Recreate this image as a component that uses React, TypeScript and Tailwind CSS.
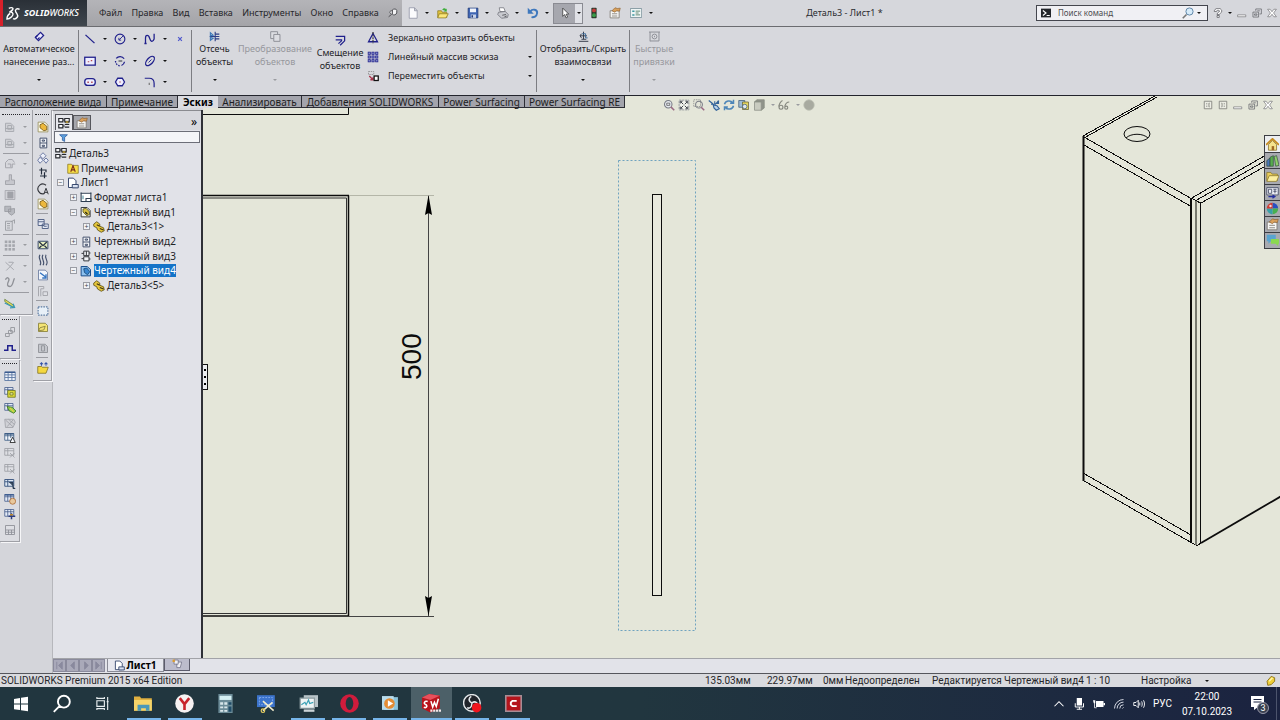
import React from "react";

const navy = "#20208c";
const gray = "#8d8f96";

const icons: Record<string, React.ReactNode> = {
  dimension: (
    <g fill="#eef" stroke={navy} strokeWidth="1.8">
      <path d="M2 9.500 9.500 2 14 6.500 6.500 14z" />
      <path d="M5 12.500 8 9.500M2 9.500 5 6.500" />
    </g>
  ),
  line: <path d="M2 2.500 14 13.500" stroke={navy} strokeWidth="1.8" />,
  circle: (
    <g fill="none" stroke={navy} strokeWidth="1.500">
      <circle cx="8" cy="8" r="6.500" />
      <path d="M7 9 12 4M6.500 6.500v3h3" strokeWidth="1.2" />
    </g>
  ),
  spline: <path d="M2 14V7c0-5 4-5 5.500 0s4 6 6 1V1M.5 14h3" fill="none" stroke={navy} strokeWidth="1.700" />,
  point: <path d="M5.500 5.500l5 5M10.500 5.500l-5 5" stroke="#5058cc" strokeWidth="1.600" />,
  rect: (
    <g>
      <rect x="1" y="3" width="14" height="10.500" fill="#eef" stroke={navy} strokeWidth="1.700" />
      <path d="M5 9h2M9 7.500h2" stroke="#b04a50" strokeWidth="1.500" />
    </g>
  ),
  arc: (
    <g fill="none" stroke={navy} strokeWidth="1.700">
      <path d="M3 4.500a6.500 6.500 0 0 1 10.500.500M14 9a6.500 6.500 0 0 1-4 5" />
      <path d="M2 8a6.500 6.500 0 0 0 6.500 6.500" strokeDasharray="2 1.500" />
      <path d="M6 8h5" stroke="#55585f" />
    </g>
  ),
  ellipse: (
    <g fill="none" stroke={navy} strokeWidth="1.700">
      <ellipse cx="8" cy="8" rx="7.500" ry="4" transform="rotate(-48 8 8)" />
      <path d="M6 10l4-4" strokeWidth="1.2" />
    </g>
  ),
  slot: (
    <g>
      <rect x="1" y="3.500" width="14" height="9" rx="4" fill="#eef" stroke={navy} strokeWidth="1.700" />
      <path d="M4.500 8.200h2M9.500 8.200h2" stroke="#b04a50" strokeWidth="2" />
    </g>
  ),
  polygon: (
    <g>
      <path d="M5 3h6l3 5-3 5H5L2 8z" fill="#eef" stroke={navy} strokeWidth="1.700" />
      <path d="M7 8h2" stroke="#b04a50" strokeWidth="1.500" />
    </g>
  ),
  fillet: (
    <g fill="none" stroke={navy} strokeWidth="1.600">
      <path d="M1 3h6c5 0 6.500 3 6.500 7v5" />
      <path d="M7 9v3" stroke="#777" />
    </g>
  ),
  trim: (
    <g fill="none" stroke="#2c3f86" strokeWidth="1.600">
      <path d="M9 1v14M1 8h14M9.500 4.500H15M9.500 11.500H15" />
      <path d="M2 2.500v4.500l4-1zM2 13.500V9.500l4 1z" stroke="#3c78b8" />
    </g>
  ),
  convert: (
    <g fill="#dcdde2" stroke={gray} strokeWidth="1.400">
      <path d="M1 1h10v10H1z" />
      <path d="M5.500 5h9v10h-9z" />
    </g>
  ),
  offset: (
    <g fill="none" stroke={navy} strokeWidth="1.800">
      <path d="M1 2h13v6.500L7.500 15" />
      <path d="M1 7h8.500v1.500L5 12.500" />
    </g>
  ),
  mirror: (
    <g>
      <path d="M8 2 2 13h12z" fill="none" stroke={navy} strokeWidth="1.700" />
      <path d="M8 0v15" stroke="#333" strokeWidth="1.500" strokeDasharray="2.500 1" />
    </g>
  ),
  pattern: (
    <g fill="#7e86c8" stroke={navy} strokeWidth="1">
      {[2, 7, 12].map((y) => [2, 7, 12].map((x) => <rect key={`${x}-${y}`} x={x - 0.5} y={y - 0.5} width="3" height="3" />))}
    </g>
  ),
  move: (
    <g>
      <rect x="2" y="2" width="7" height="4" fill="none" stroke="#888" strokeDasharray="2 1" />
      <path d="M3 8l5 5M8 9.500V13H4.500" fill="none" stroke="#a8334a" strokeWidth="1.700" />
      <rect x="9.500" y="8" width="5.500" height="6" fill="#fff" stroke="#111" strokeWidth="1.700" />
    </g>
  ),
  relations: (
    <g fill="none" stroke="#333a4a" strokeWidth="1.400">
      <path d="M1 15h14M8 1v11M3 7h10M5 4l-2 3 2 3M5 12h7" />
      <path d="M6 4h5v6h3" stroke="#3c6a98" />
    </g>
  ),
  snaps: (
    <g fill="none" stroke={gray} strokeWidth="1.400">
      <path d="M0 1.500h16M1.500 1.500V15M1.500 14.500h13M14.500 1.500V14.500" />
      <circle cx="8" cy="8" r="3.500" />
      <path d="M8 7v2" />
    </g>
  ),
  pin: (
    <g fill="#f4f4f6" stroke="#4a4b50" strokeWidth="1.500">
      <path d="M7 3c2-2 7-2 7 1v4c-1 3-5 4-7 2zM7 4.500C2 4 2 8 5 9.500M6 10l-5 4" />
    </g>
  ),
  file: <path d="M3 1h7l3.500 3.500V15H3zM10 1v4h3.500" fill="#fbfbfd" stroke="#8b8fa0" />,
  open: (
    <g>
      <path d="M1 14V5h5l1 2h6v7z" fill="#e3c33c" stroke="#8c7a20" />
      <path d="M3 9h12l-3 5.500H1z" fill="#fbe67a" stroke="#8c7a20" />
      <path d="M7 4c1-3 4-3 5-1l1-1v4H9l1.500-1.500" fill="#3fae3c" />
    </g>
  ),
  save: (
    <g>
      <path d="M1.500 1.500h13v13h-13z" fill="#3f66b4" stroke="#1f3774" />
      <path d="M4 2h8v5H4z" fill="#f0f3fa" />
      <path d="M5 10h7v4.500H5z" fill="#c9d3e8" />
      <path d="M6 11h2v3H6z" fill="#1f3774" />
    </g>
  ),
  print: (
    <g stroke="#6c6e75">
      <path d="M3 1h6l2 5H4z" fill="#fff" />
      <path d="M2 7l9-1 4 4-1 4-8 1-5-5z" fill="#c9cad0" />
      <path d="M7 11l5-1M10 13l3-1" fill="none" stroke="#3c3d42" />
    </g>
  ),
  undo: (
    <g>
      <path d="M1 1v8h8z" fill="#3f78bd" />
      <path d="M4.500 6C7 2 14 3 13.500 8S9 14 6 13.500" fill="none" stroke="#3f78bd" strokeWidth="2.600" />
    </g>
  ),
  cursor: <path d="M5 1.500v11l2.500-2.500L9.500 14.500l2-1-2-4h3.500z" fill="#fff" stroke="#333" />,
  light: (
    <g>
      <rect x="4.500" y="1" width="7" height="14" rx="1" fill="#2c3a2c" />
      <circle cx="8" cy="4.500" r="2.600" fill="#c43a3a" />
      <circle cx="8" cy="11" r="2.600" fill="#3a9c48" />
    </g>
  ),
  props: (
    <g>
      <path d="M1.500 5h12v9.500h-12z" fill="#f6f6f4" stroke="#77716a" />
      <path d="M4 9h7M4 12h7" stroke="#77716a" />
      <path d="M4 5l4-4 3 1 4-.5-1 4-4-.5-2 2z" fill="#d9a05c" stroke="#8a5c2c" strokeWidth=".8" />
    </g>
  ),
  options: (
    <g>
      <path d="M.5 2h15v12H.5z" fill="#eef4f4" stroke="#6f8792" />
      <path d="M3 4.500h3v2H3zM3 9.500h3v2H3z" fill="#3f98a0" />
      <path d="M7.500 5.500h6M7.500 8h4M7.500 10.500h6" stroke="#3e6c50" />
    </g>
  ),
  prompt: (
    <g>
      <path d="M0 1h16v14H0z" fill="#23262b" />
      <path d="M3 4l5 4-5 4M9 12h5" fill="none" stroke="#fff" strokeWidth="1.800" />
    </g>
  ),
  search: (
    <g>
      <path d="M6 10l-5 5" stroke="#777" strokeWidth="2.200" />
      <circle cx="10" cy="6" r="4.800" fill="#d7ebf9" stroke="#5f86a8" strokeWidth="1.300" />
    </g>
  ),
  help: <path d="M2 5.500C2-1 14-1 14 5c0 3.500-4 3.500-4 5.500H6.500c0-4 4-3.500 4-5.500s-5-2-5 .5zM6.500 12H10v3H6.500z" fill="#fff" stroke="#55565c" strokeWidth="1.200" />,
  min: <path d="M1 11h13v3H1z" fill="#fff" stroke="#66676c" />,
  restore: (
    <g fill="none" stroke="#66676c" strokeWidth="1.200">
      <path d="M1.500 6.500h9v8h-9zM4 9.500h4v2H4zM6 4.500V1.500h9v8h-3M8.500 4.500h4" />
    </g>
  ),
  close: <path d="M1 2h4l3 4 3-4h4l-4.500 6 4.500 6h-4l-3-4-3 4H1l4.500-6z" fill="#fff" stroke="#66676c" />,
  paneL: <path d="M2 2h12v12H2zM6 5v2M6 9v2M10.500 5h-1v6h1" fill="#ecede4" stroke="#7b7c78" strokeWidth="1.300" />,
  paneR: <path d="M2 2h12v12H2zM5.500 5h1v6h-1M10 5v2M10 9v2" fill="#ecede4" stroke="#7b7c78" strokeWidth="1.300" />,
  zoomPrev: (
    <g fill="none">
      <circle cx="7" cy="7" r="5" fill="#e6eaf0" stroke="#777b84" strokeWidth="1.400" />
      <path d="M5 5.500h4v3H5z" stroke="#555" />
      <path d="M10.500 10.500l4.500 4.500" stroke="#9a6b84" strokeWidth="2" />
    </g>
  ),
  zoomFit: (
    <g fill="none" stroke="#3c4048">
      <path d="M1.500 1.500h13v13h-13z" fill="#f0f1ec" stroke="#80848c" strokeDasharray="3 1" />
      <path d="M4 4l3 3M12 4L9 7M4 12l3-3M9 9l3 3M3 6V3h3M10 3h3v3M3 10v3h3M13 10v3h-3" strokeWidth="1.300" />
    </g>
  ),
  zoomArea: (
    <g fill="none">
      <path d="M1 1h9v9H1z" stroke="#888" strokeDasharray="2 1" />
      <circle cx="8" cy="7.500" r="4.500" stroke="#777b84" strokeWidth="1.400" />
      <path d="M11 11l4 4" stroke="#9a6b84" strokeWidth="2" />
    </g>
  ),
  section: (
    <g fill="none" stroke="#33639a" strokeWidth="1.500">
      <path d="M1 2l5 4 3 5M4 7h6l4-5M9 3v4M14 2v4h-4" />
      <path d="M7 8l5 1 3 4-4 2-3-3z" fill="#b9d3ea" />
    </g>
  ),
  rotate: (
    <g fill="none" stroke="#4d86b8" strokeWidth="2">
      <path d="M2 7c1-5 8-6 11-2M14 1v4.500H9.500M14 9c-1 5-8 6-11 2M2 15v-4.500h4.500" />
    </g>
  ),
  view3d: (
    <g>
      <path d="M1 2h8v9H1z" fill="#9dbbd6" stroke="#3f5c78" />
      <path d="M6 4h8v10H6z" fill="#e6d65c" stroke="#66603a" />
      <circle cx="9" cy="10" r="3" fill="#dfe7ee" stroke="#3f5c78" />
    </g>
  ),
  cube: (
    <g stroke="#8a8d84">
      <path d="M2 4l3-3h10v11l-4 3V4z" fill="#90938a" />
      <path d="M2 4h9v11H2z" fill="#c9cbc0" />
    </g>
  ),
  glasses: (
    <g fill="none" stroke="#84867e" strokeWidth="1.500">
      <path d="M1 10c1-4 3-7 5-8M9 10c1-4 3-6 6-6" />
      <circle cx="4" cy="11" r="2.600" />
      <circle cx="11" cy="11.500" r="2" />
    </g>
  ),
  sphere: <circle cx="8" cy="8" r="7" fill="#a8aaa0" stroke="#bfc1b6" />,
  home: (
    <g>
      <path d="M3 8v7h10V8L8 3z" fill="#f5e38c" stroke="#8a7430" />
      <path d="M0 8.500 8 1l8 7.500" fill="none" stroke="#c58a1c" strokeWidth="2.200" />
      <path d="M7 10h3v5H7z" fill="#a06a24" />
    </g>
  ),
  books: (
    <g stroke="#2d4c38" strokeWidth=".8">
      <path d="M1 8l4-3v10H1z" fill="#4a76b8" />
      <path d="M5 4l4-2v13H5z" fill="#57ad4e" />
      <path d="M10 3l3-1 3 12-4 1z" fill="#8fd06c" />
    </g>
  ),
  folder: (
    <g stroke="#8c7a30">
      <path d="M1 13V3h5l1.500 2H14v8z" fill="#e9cd5c" />
      <path d="M4 7h12l-3 7H1z" fill="#fcefa0" />
    </g>
  ),
  palette: (
    <g>
      <path d="M1 2h14v9H1z" fill="#eef0f6" stroke="#3e4560" />
      <path d="M3 4h4v5H3zM9 4h4M9 6.500h4M11 4v5" fill="none" stroke="#3e4560" />
      <path d="M3 13h7M8 11l3 2-3 2" fill="none" stroke="#2630a0" strokeWidth="1.500" />
    </g>
  ),
  colors: (
    <g>
      <path d="M8 8V1a7 7 0 0 1 7 7z" fill="#2a50c0" />
      <path d="M8 8h7a7 7 0 0 1-7 7z" fill="#48b050" />
      <path d="M8 8v7a7 7 0 0 1-7-7z" fill="#38a0a8" />
      <path d="M8 8H1a7 7 0 0 1 7-7z" fill="#d03c34" />
      <circle cx="5.500" cy="5" r="1.500" fill="#fff" opacity=".8" />
    </g>
  ),
  chat: (
    <g>
      <path d="M1 1h11v8H6l-3 3V9H1z" fill="#58a4d0" />
      <path d="M6 6h10v6h-1v3l-3-3H6z" fill="#8ad850" />
    </g>
  ),
  tree: (
    <g fill="#f6f6f8" stroke="#26282e" strokeWidth="1.500">
      <path d="M1 2h5.500v4.500H1zM9 2h6v4.500H9zM1 10h5.500v4.500H1z" />
      <path d="M9 10h6M9 13.500h6M6.500 4H9M6.500 12H9" fill="none" />
      <path d="M10 5.500h4v2.500h-4z" fill="#d9b03c" strokeWidth=".6" />
    </g>
  ),
  note: (
    <g>
      <path d="M1 3h5l1 1.500h8V15H1z" fill="#f7df48" stroke="#8a7420" />
      <path d="M5 13l3-8 3 8M6 10.500h4" fill="none" stroke="#7a2c1c" strokeWidth="1.500" />
    </g>
  ),
  sheet: (
    <g fill="#fff" stroke="#34466c" strokeWidth="1.300">
      <path d="M2 1.500h6.500L12 5v9H2z" />
      <path d="M7 10h8v4.500H7z" fill="#dce4f2" />
    </g>
  ),
  format: (
    <g fill="#fff" stroke="#2c3c50" strokeWidth="1.400">
      <path d="M1.500 2v12h13V2" />
      <path d="M1 3h14M8 10h6.500v4H8z" />
      <path d="M4 6v5" stroke="#4a8c9c" />
    </g>
  ),
  viewRound: (
    <g>
      <path d="M1.500 2h8l4 4v8.500h-12z" fill="#f4f4e8" stroke="#34363c" strokeWidth="1.300" />
      <path d="M4 4l4-1 4 4 1 4-4 2-5-5z" fill="#d8c040" stroke="#4c4820" />
      <path d="M7 8l3 3" stroke="#282818" strokeWidth="1.600" />
    </g>
  ),
  part: (
    <g stroke="#5c5014" strokeWidth="1.100">
      <path d="M1 4l4-3 4 3v3l5 2 1 4-4 2-5-3-1-3-4-2z" fill="#e8c83c" />
      <path d="M5 5l4 2M9 10l5 2" fill="none" stroke="#3c3410" strokeWidth="1.500" />
    </g>
  ),
  viewFlat: <path d="M4 1.500h9v13H4zM4 8h9M7 4h3v1.500H7zM7 11h3v1.500H7z" fill="#f2f4f8" stroke="#44506c" strokeWidth="1.300" />,
  viewFlat2: <path d="M5 1.500h7v6H5zM5 9h7v5.500H5zM2 4.500h3M2 11.500h3M8.500 1.500v6M12 4h2M12 12h2" fill="#f2f4f8" stroke="#34363c" strokeWidth="1.300" />,
  viewBlue: (
    <g>
      <path d="M1.500 2h8l4.500 4v8.500H1.500z" fill="#8cc0ee" stroke="#1c4c88" strokeWidth="1.300" />
      <path d="M5 5l4-1 4 5-3 4-4-3z" fill="#3a86d0" stroke="#12406c" />
    </g>
  ),
  filter: <path d="M1 3h14L10 8v7l-4-2V8z" fill="#5ea0dc" stroke="#1c4c94" strokeWidth="1.200" />,
  gPart: <path d="M2 3h7l4 4v7H2zM5 6h5v5H5zM2 10h11" fill="#d0d1d6" stroke="#a6a8ae" strokeWidth="1.200" />,
  gRound: <path d="M2 13V6l4-4h5l3 4M2 13h9V8h4M5 8h4v4" fill="#d6d7dc" stroke="#a0a2a8" strokeWidth="1.200" />,
  gBase: <path d="M7 1h3v7h4v6H2V9h5z" fill="#c6c7cd" stroke="#a0a2a8" strokeWidth="1.200" />,
  gSolid: (
    <g stroke="#a0a2a8">
      <path d="M1.500 2h13v12h-13z" fill="#d0d1d6" />
      <path d="M5 4h7v8H5z" fill="#a0a2a8" />
    </g>
  ),
  gCubes: <path d="M1 3h8v7H1zM6 7l8-1v6l-4 3-4-3z" fill="#b6b8be" stroke="#94969c" />,
  gList: <path d="M2 3h9v12H2zM4 6h4M4 9h4M4 12h4M9 4l5-3v5" fill="#d8d9de" stroke="#9a9ca2" strokeWidth="1.200" />,
  gDots: (
    <g fill="#a4a6ac">
      {[2, 7, 12].map((y) => [1, 6, 11].map((x) => <rect key={`${x}-${y}`} x={x} y={y} width="3.500" height="3.500" />))}
    </g>
  ),
  gCross: <path d="M2 3l11 10M13 3l-5 6-5 5M6 3h6" fill="none" stroke="#a6a8ae" strokeWidth="1.300" />,
  gCurve: <path d="M2 5c2-5 6-2 4 2s-2 7 2 7 4-8 6-11" fill="none" stroke="#8f9197" strokeWidth="1.800" />,
  ruler: (
    <g>
      <path d="M1 3l12 8-1 3-11-8z" fill="#e2da58" stroke="#5d7a3c" />
      <path d="M1 8l12 6M12 9l2 5-6 .5" fill="none" stroke="#3a98b4" strokeWidth="1.800" />
    </g>
  ),
  gBlocks: <path d="M2 10h5v4H2zM6 6h5v4H6zM9 2h5v6H9z" fill="#dcdde2" stroke="#94969c" strokeWidth="1.200" />,
  step: <path d="M0 11h5V5h6v6h5" fill="none" stroke={navy} strokeWidth="2" />,
  table: (
    <g>
      <path d="M1 3h14v11H1zM1 6.500h14M1 10h14M5.500 3v11M10.500 3v11" fill="#eef3fa" stroke="#5c78a4" strokeWidth="1.200" />
      <path d="M1 3h14" stroke="#3c5c90" strokeWidth="2" />
    </g>
  ),
  tableY: (
    <g>
      <path d="M1 2h11v9H1zM1 5h11M5 2v9" fill="#e4ebf6" stroke="#3c5484" />
      <path d="M5 6h10v9H5z" fill="#dcd838" stroke="#66701c" />
      <path d="M8 9h4v3H8z" fill="#f6f4a0" stroke="#66701c" />
    </g>
  ),
  tableG: (
    <g>
      <path d="M1 2h11v9H1zM1 5h11M5 2v9" fill="#e4ebf6" stroke="#3c5484" />
      <path d="M4 6l7 1 5 5-3 3-6-3z" fill="#8cd04c" stroke="#3c6c1c" />
      <path d="M8 8l5 5" stroke="#e8d040" strokeWidth="1.600" />
    </g>
  ),
  gHatch: <path d="M1 3h12l2 4-3 7H2zM2 4l10 9M6 3l8 7M12 4L4 13" fill="#d0d1d6" stroke="#9c9ea4" />,
  tableA: (
    <g fill="#f4f7fc" stroke="#3c5c84" strokeWidth="1.100">
      <path d="M1 2h12v9H1zM1 5h12M5 2v9M9 2v6" />
      <path d="M8 14l3.500-7 3.500 7z" stroke="#222" />
      <path d="M1 2.500h12" strokeWidth="2" />
    </g>
  ),
  gTable: <path d="M1 2h12v9H1zM1 5h12M5 2v9M8 8l6 6M14 8l-6 6" fill="#dedfe4" stroke="#9c9ea4" strokeWidth="1.100" />,
  tableB: (
    <g fill="#dfe8f4" stroke="#34507c" strokeWidth="1.200">
      <path d="M1 2h12v9H1zM1 5h12M5 2v9" />
      <path d="M7 6h5v8h3" fill="#3c5068" stroke="#22344c" />
    </g>
  ),
  tableO: (
    <g>
      <path d="M1 2h12v9H1zM1 5h12M5 2v9M9 2v9" fill="#e4ebf6" stroke="#3c5484" />
      <path d="M1 2.500h12" stroke="#3c5c90" strokeWidth="2" />
      <circle cx="11.500" cy="11" r="4" fill="#e8c89c" stroke="#a8642c" />
    </g>
  ),
  tableR: (
    <g>
      <path d="M1 2h12v9H1zM1 5h12M5 2v9M9 2v9" fill="#e4ebf6" stroke="#3c5484" />
      <path d="M6 11h9M10 7v8" stroke="#2c3c80" strokeWidth="2" />
      <path d="M8 9h4" stroke="#c08c30" strokeWidth="2" />
    </g>
  ),
  gGrid: <path d="M2 2h12v12H2zM2 8h12M2 11h12M6 8v6M10 8v6" fill="#dedfe4" stroke="#90929a" strokeWidth="1.200" />,
  modelView: (
    <g>
      <path d="M1.500 1.500h9l4 4v9h-13z" fill="#fdfbe8" stroke="#8c8450" />
      <path d="M4 5l4-2 5 4v5l-4 1-5-4z" fill="#ecb83c" stroke="#6a4c10" />
    </g>
  ),
  diamond: <path d="M8 1l4 4-4 4-4-4zM4 7l4 4-4 4-3-4zM12 8l3 3-3 4-3-4z" fill="#eef1fa" stroke="#4a5a8c" />,
  align: <path d="M6 1v9M3 4h9v3M10 7v8M4 12h9" fill="none" stroke="#222c3c" strokeWidth="1.600" />,
  detail: (
    <g fill="none" stroke="#34363c" strokeWidth="1.500">
      <path d="M12 3a6.500 6.500 0 1 0-2 11" />
      <path d="M9 15l3-8 3 8M10 12.500h4" strokeWidth="1.300" />
    </g>
  ),
  broken: (
    <g fill="#e4e8f2" stroke="#4a5a80" strokeWidth="1.200">
      <path d="M1.500 2h8v8h-8zM7 8h8v6H7z" />
      <path d="M1.500 5h8M9 11h4" />
    </g>
  ),
  crop: (
    <g>
      <path d="M1.500 3h13v10h-13z" fill="#e8f0c0" stroke="#34466c" strokeWidth="1.300" />
      <path d="M3 4l5 5 5-5M3 12l3-3M13 12l-3-3" fill="none" stroke="#222c3c" strokeWidth="1.500" />
    </g>
  ),
  squiggle: <path d="M4 1c-4 5 4 9 0 14M8 1c-4 5 4 9 0 14M12 1c-3 5 5 9 0 14" fill="none" stroke="#44506c" strokeWidth="1.500" />,
  cropDoc: (
    <g>
      <path d="M2 1.500h9l3 3v10H2z" fill="#f2f6fc" stroke="#5a6c94" />
      <path d="M4 5l8 6M12 7v5H7" fill="none" stroke="#3474c0" strokeWidth="1.800" />
    </g>
  ),
  gPipes: <path d="M2 15V2h7v3H5v10M8 9h6v5H8z" fill="#dedfe4" stroke="#a0a2a8" strokeWidth="1.200" />,
  selection: <rect x="1.500" y="2.500" width="13" height="11" fill="#e8f0f8" stroke="#5878a0" strokeWidth="1.500" strokeDasharray="2 1.500" />,
  picture: <path d="M2 3h9l3 3v8H2zM4 9l7-2-2 5-7 1z" fill="#f4e474" stroke="#8c8440" strokeWidth="1.200" />,
  gClip: <path d="M2 3h9l3 3v8H2zM6 5h4v7H6z" fill="#c4c6cc" stroke="#94969c" strokeWidth="1.300" />,
  folderUp: (
    <g>
      <path d="M1 6h5l1 1h8l-3 8H1z" fill="#f4d840" stroke="#7c6c1c" />
      <path d="M6 5V1M4 3l2-2 2 2M12 5V1M10 3l2-2 2 2" fill="none" stroke="#3454a8" strokeWidth="1.400" />
    </g>
  ),
  coin: (
    <g>
      <path d="M3 9 9 2l5 2v5l-5 5-5 1z" fill="#efcf38" stroke="#8a7018" strokeWidth="1.300" />
      <path d="M6 9l5-5" stroke="#fff6b0" strokeWidth="2" />
    </g>
  ),
  win: <path d="M1 3l6-1v5.600H1zM8 1.800 15 .8v6.800H8zM1 8.500h6V14l-6-.8zM8 8.500h7v6.700l-7-1z" fill="#fff" />,
  find: <path d="M10 1.500a5 5 0 1 1 0 10 5 5 0 0 1 0-10zM6.500 10 1.500 15" fill="none" stroke="#fff" strokeWidth="1.600" />,
  taskView: <path d="M2 5h8v6H2zM2 1v1.500h8V1M2 15v-1.500h8V15M13.500 1v14M12.500 6h2" fill="none" stroke="#e8eef0" strokeWidth="1.200" />,
  explorer: (
    <g>
      <path d="M0 2h5l1 1.500h9V14H0z" fill="#e0b040" />
      <path d="M0 5h15v9H0z" fill="#f6d56a" />
      <path d="M3 14V9h10v5h-3v-2H6v2z" fill="#4a98b8" />
    </g>
  ),
  yandex: (
    <g>
      <circle cx="8" cy="8" r="7.800" fill="#f6f2f2" />
      <path d="M4 3.500 8 8.500 12 3.500M8 8v5.500" fill="none" stroke="#c8242c" strokeWidth="2.200" />
    </g>
  ),
  calc: (
    <g>
      <path d="M2 0h12v16H2z" fill="#6c8c98" />
      <path d="M3 1.500h10V5H3z" fill="#d4f0f4" />
      <path d="M3.500 7h2.500v2H3.500zM7 7h2.500v2H7zM3.500 10.500h2.500v1.500H3.500zM7 10.500h2.500v1.500H7zM3.500 13.500h2.500V15H3.500zM7 13.500h2.500V15H7z" fill="#d8e6ea" />
      <path d="M10.500 7H13v2h-2.500zM10.500 10.500H13V15h-2.500z" fill="#204c68" />
    </g>
  ),
  snip: (
    <g>
      <path d="M0 1h15v10H0z" fill="#3c74cc" />
      <path d="M2 3h11v6H2z" fill="none" stroke="#84acec" strokeDasharray="1.500 1" strokeWidth=".8" />
      <path d="M5 6l9 8M13 7l-8 7" stroke="#f2eccc" strokeWidth="1.300" />
      <circle cx="5" cy="14" r="1.500" fill="none" stroke="#e8d060" />
    </g>
  ),
  monitor: (
    <g>
      <path d="M4 1h12v10H4z" fill="#b8c4c8" />
      <path d="M1 3.500h12v8.500H1z" fill="#eef4f4" stroke="#8c9ca0" />
      <path d="M2 9l3-2 1 2 2-4 1 3 3-1" fill="none" stroke="#38a0b4" />
      <path d="M4 15h9v-2H4z" fill="#ccd4d8" />
    </g>
  ),
  opera: (
    <g>
      <circle cx="8" cy="8" r="7.800" fill="#d01c3c" />
      <ellipse cx="8" cy="8" rx="3.200" ry="5.400" fill="#22373f" />
    </g>
  ),
  player: (
    <g>
      <path d="M2 2h13v12H2z" fill="#8cc4dc" />
      <path d="M0 1h11v13H0z" fill="#b8dcec" />
      <circle cx="7" cy="8" r="5" fill="#e48c34" />
      <path d="M5.500 5l5 3-5 3z" fill="#fff" />
    </g>
  ),
  solidworks: (
    <g>
      <path d="M0 3 6 0l9 1.500V12L7 15.500 0 12z" fill="#b8141c" />
      <path d="M0 3 6 0l9 1.500L7 5z" fill="#e8505c" />
      <path d="M4.800 6.300C2 5.500 1 8 3 8.800S4 12.200 1.500 11.200M7.500 6l1.500 5 1.500-4L12 10.500 13.800 4" fill="none" stroke="#fff" strokeWidth="1.300" />
      <path d="M7 14h9" stroke="#f4e8e8" strokeWidth="2" strokeDasharray="1.800 .6" />
    </g>
  ),
  obs: (
    <g>
      <circle cx="7.500" cy="7.500" r="7" fill="#20242a" stroke="#e4e8ea" strokeWidth="1.200" />
      <path d="M7.500 7.500C4 6 5 3 7 2M7.500 7.500c3-2 5 0 5 2M7.500 7.500c0 4-2 5-4 4" fill="none" stroke="#e4e8ea" strokeWidth="1.300" />
      <circle cx="11.500" cy="11.500" r="4" fill="#f0141c" />
    </g>
  ),
  camtasia: (
    <g>
      <path d="M0 0h16v16H0z" fill="#a88c94" />
      <path d="M1.500 1.500h13v13h-13z" fill="#b4141c" />
      <path d="M11 5.500H7L5.500 7v2L7 10.500h4" fill="none" stroke="#fff" strokeWidth="1.800" />
    </g>
  ),
  chevronUp: <path d="M2 11l6-6 6 6" fill="none" stroke="#fff" strokeWidth="1.400" />,
  mic: (
    <g>
      <path d="M5 0h7v10H5z" fill="#fff" />
      <path d="M3 7v5h11V7M8.500 12v3M5 15h7" fill="none" stroke="#fff" strokeWidth="1.300" />
    </g>
  ),
  battery: (
    <g>
      <path d="M4 4h10v8H4z" fill="#fff" />
      <path d="M14 6.500h2v3h-2zM0 3h3v4H1z" fill="#fff" />
      <path d="M2 6v7h3" fill="none" stroke="#fff" />
    </g>
  ),
  wifi: <path d="M2 14A12 12 0 0 1 14 2M5.500 14A8.500 8.500 0 0 1 14 5.500M9 14a5 5 0 0 1 5-5M12.500 14l1.500-1.500" fill="none" stroke="#e4e8f0" strokeWidth="1.200" />,
  speaker: <path d="M1 6h3l3-3v10l-3-3H1zM9 6v4M11.500 4.500c1 2 1 5 0 7M14 3c1.800 3 1.800 7 0 10" fill="none" stroke="#fff" strokeWidth="1.200" />,
  addSheet: (
    <g>
      <path d="M3 1.500h6v6H3zM9 4.500h5l-2 8H7V7" fill="#f0f0f4" stroke="#64647c" />
      <path d="M1 1l3 3M4 1L1 4" stroke="#dc9c30" strokeWidth="1.800" />
    </g>
  ),
};

function Icon({ name, className = "size-3" }: { name: string; className?: string }) {
  return (
    <svg viewBox="0 0 16 16" fill="none" className={`block shrink-0 ${className}`} aria-hidden="true">
      {icons[name]}
    </svg>
  );
}

function Caret({ muted = false }: { muted?: boolean }) {
  return (
    <svg viewBox="0 0 4 2" className="block h-[2px] w-[4px] shrink-0" aria-hidden="true">
      <path d="M0 0h4L2 2z" fill={muted ? "#9a9ba0" : "#111"} />
    </svg>
  );
}

const menus = ["Файл", "Правка", "Вид", "Вставка", "Инструменты", "Окно", "Справка"];

const quick = [
  ["file", "Создать"],
  ["open", "Открыть"],
  ["save", "Сохранить"],
  ["print", "Печать"],
  ["undo", "Отменить"],
];

function TitleBar() {
  return (
    <header className="flex h-[27px] items-stretch border-b border-[#6b6c70] bg-[#d6d7dc]">
      <div className="flex w-[87px] shrink-0 items-center gap-[3px] border-l-[3px] border-[#d8202a] bg-linear-to-b from-[#2a3037] to-[#3f464d] pl-[3px]">
        <svg viewBox="0 0 16 16" className="size-[15px] shrink-0" fill="none" stroke="#fff" strokeWidth="1.500" aria-hidden="true">
          <path d="M3 2.500C6 1 8.500 2 7 4S4.500 6 3.500 6.500C8 6 8.500 9 6 11.500S2 14 1 14c0-3 1.500-5 3.500-6" />
          <path d="M14.500 3.500C11.500 2 9 4 10.500 6.500S13.500 10 12 12s-3.500 2-4.500 1.500" />
        </svg>
        <span className="text-[9px] font-medium text-white italic">
          <b>SOLID</b>WORKS
        </span>
      </div>
      <nav className="flex w-[315px] shrink-0 items-center justify-between bg-linear-to-b from-[#b4b4b8] to-[#a4a4a8] pr-1 pl-3 text-[9px] text-[#26262a]">
        {menus.map((m) => (
          <button key={m}>{m}</button>
        ))}
        <button aria-label="Закрепить меню">
          <Icon name="pin" className="size-[10px]" />
        </button>
      </nav>
      <div className="flex items-center gap-[4px] pl-[5px]">
        <div className="flex items-center gap-[8px]">
          {quick.map(([icon, label]) => (
            <button key={icon} aria-label={label} className="flex items-center gap-[6px]">
              <Icon name={icon} />
              <Caret />
            </button>
          ))}
        </div>
        <button aria-label="Выбрать" className="flex h-[21px] w-[30px] items-center border border-[#8a8b92] bg-[#e0e1e6]">
          <span className="flex h-full w-[21px] items-center justify-center bg-[#a6a7ae]">
            <Icon name="cursor" />
          </span>
          <span className="pl-[2px]">
            <Caret />
          </span>
        </button>
        <div className="flex items-center gap-[9px] pl-[1px]">
          <button aria-label="Перестроить">
            <Icon name="light" />
          </button>
          <button aria-label="Свойства файла">
            <Icon name="props" />
          </button>
          <button aria-label="Параметры" className="flex items-center gap-[7px]">
            <Icon name="options" />
            <Caret />
          </button>
        </div>
      </div>
      <h1 className="flex flex-1 items-center justify-center text-[9px] text-[#2c2c30]">Деталь3 - Лист1 *</h1>
      <div className="flex items-center gap-[5px] pr-[3px]">
        <label className="flex h-[16px] w-[172px] items-center border border-[#44464e] bg-[#f0f0f4] px-1">
          <Icon name="prompt" className="size-[10px]" />
          <input aria-label="Поиск команд" placeholder="Поиск команд" className="ml-[7px] w-[124px] bg-transparent text-[8px] outline-none placeholder:text-[#4c4c50]" />
          <Icon name="search" />
          <span className="ml-[3px]">
            <Caret />
          </span>
        </label>
        <button aria-label="Справка" className="flex items-center gap-[5px]">
          <Icon name="help" className="size-[10px]" />
          <Caret />
        </button>
        <button aria-label="Свернуть">
          <Icon name="min" className="size-[10px]" />
        </button>
        <button aria-label="Восстановить">
          <Icon name="restore" className="size-[10px]" />
        </button>
        <button aria-label="Закрыть">
          <Icon name="close" className="size-[10px]" />
        </button>
      </div>
    </header>
  );
}

function BigTool({ icon, lines, width, muted = false, low = false, caret = true }: { icon: string; lines: string[]; width: string; muted?: boolean; low?: boolean; caret?: boolean }) {
  return (
    <button className={`flex shrink-0 flex-col items-center ${low ? "pt-[8px]" : "pt-[4px]"} text-[9px] leading-[13px] ${width} ${muted ? "text-[#96979c]" : "text-[#222226]"}`}>
      <Icon name={icon} className="size-[11px]" />
      {lines.map((l) => (
        <span key={l} className="whitespace-nowrap">
          {l}
        </span>
      ))}
      {caret && (
        <span className="pt-[11px]">
          <Caret muted={muted} />
        </span>
      )}
    </button>
  );
}

const sketchTools = [
  ["line", "Линия", 1],
  ["circle", "Окружность", 1],
  ["spline", "Сплайн", 1],
  ["point", "Точка", 0],
  ["rect", "Прямоугольник", 1],
  ["arc", "Дуга", 1],
  ["ellipse", "Эллипс", 1],
  ["", "", 0],
  ["slot", "Прорезь", 1],
  ["polygon", "Многоугольник", 0],
  ["fillet", "Скругление", 1],
] as const;

const listTools = [
  ["mirror", "Зеркально отразить объекты", 0],
  ["pattern", "Линейный массив эскиза", 1],
  ["move", "Переместить объекты", 1],
] as const;

function Divider() {
  return <div className="my-[3px] w-px shrink-0 bg-[#7c7d82]" />;
}

function Ribbon() {
  return (
    <section className="flex h-[68px] items-stretch bg-[#d7d8dd]">
      <BigTool icon="dimension" lines={["Автоматическое", "нанесение раз..."]} width="w-[78px]" />
      <Divider />
      <div className="grid w-[112px] shrink-0 grid-cols-[30px_30px_30px_1fr] grid-rows-[22px_21px_21px] pt-[1px] pl-[5px]">
        {sketchTools.map(([icon, label, drop], i) =>
          icon ? (
            <button key={i} aria-label={label} className="flex items-center gap-[7px]">
              <Icon name={icon} />
              {drop ? <Caret /> : null}
            </button>
          ) : (
            <span key={i} />
          ),
        )}
      </div>
      <Divider />
      <BigTool icon="trim" lines={["Отсечь", "объекты"]} width="w-[45px]" />
      <BigTool icon="convert" lines={["Преобразование", "объектов"]} width="w-[76px]" muted />
      <BigTool icon="offset" lines={["Смещение", "объектов"]} width="w-[54px]" low caret={false} />
      <div className="flex w-[169px] shrink-0 flex-col pt-[1px] text-[9px] text-[#222226]">
        {listTools.map(([icon, label, drop]) => (
          <button key={icon} className="flex h-[19px] items-center pr-[4px]">
            <Icon name={icon} />
            <span className="ml-[9px] flex-1 text-left">{label}</span>
            {drop ? <Caret /> : null}
          </button>
        ))}
      </div>
      <Divider />
      <BigTool icon="relations" lines={["Отобразить/Скрыть", "взаимосвязи"]} width="w-[92px]" />
      <Divider />
      <BigTool icon="snaps" lines={["Быстрые", "привязки"]} width="w-[48px]" muted />
    </section>
  );
}

const tabs = [
  ["Расположение вида", "w-[107px]"],
  ["Примечание", "w-[71px]"],
  ["Эскиз", "w-[40px]"],
  ["Анализировать", "w-[84px]"],
  ["Добавления SOLIDWORKS", "w-[137px]"],
  ["Power Surfacing", "w-[86px]"],
  ["Power Surfacing RE", "w-[100px]"],
];

function Tabs() {
  return (
    <div role="tablist" className="z-10 col-span-3 col-start-1 row-start-1 flex h-[13px] self-start justify-self-start border-t border-[#22242c] text-[10px] leading-[12px]">
      {tabs.map(([label, width]) => (
        <button
          key={label}
          role="tab"
          aria-selected={label === "Эскиз"}
          className={
            label === "Эскиз"
              ? `${width} bg-[#dcdde2] font-bold whitespace-nowrap text-black`
              : `${width} border-r border-b border-[#2c2d34] bg-[#a3a4ac] whitespace-nowrap text-[#1e1e22]`
          }
        >
          {label}
        </button>
      ))}
    </div>
  );
}

type Tool = [icon: string, height: string, drop?: number];

const toolsA: Tool[] = [
  ["gPart", "h-[16px]", 1],
  ["gPart", "h-[16px]", 1],
  ["-", "h-[5px]"],
  ["gRound", "h-[16px]", 1],
  ["gBase", "h-[15px]"],
  ["gSolid", "h-[15px]"],
  ["gCubes", "h-[15px]"],
  ["gList", "h-[15px]"],
  ["-", "h-[5px]"],
  ["gDots", "h-[15px]", 1],
  ["-", "h-[6px]"],
  ["gCross", "h-[16px]", 1],
  ["gCurve", "h-[16px]", 1],
  ["-", "h-[5px]"],
  ["ruler", "h-[16px]"],
];
const toolsB: Tool[] = [
  ["gBlocks", "h-[16px]"],
  ["step", "h-[16px]"],
];
const toolsC: Tool[] = [
  ["table", "h-[16px]"],
  ["tableY", "h-[16px]"],
  ["tableG", "h-[15px]"],
  ["gHatch", "h-[15px]"],
  ["tableA", "h-[15px]"],
  ["gTable", "h-[16px]"],
  ["gTable", "h-[15px]"],
  ["tableB", "h-[15px]"],
  ["tableO", "h-[15px]"],
  ["tableR", "h-[16px]"],
  ["gGrid", "h-[15px]"],
];
const toolsD: Tool[] = [
  ["modelView", "h-[16px]"],
  ["viewFlat", "h-[15px]"],
  ["diamond", "h-[15px]"],
  ["align", "h-[16px]"],
  ["detail", "h-[15px]"],
  ["modelView", "h-[15px]"],
  ["-", "h-[5px]"],
  ["broken", "h-[16px]"],
  ["-", "h-[5px]"],
  ["crop", "h-[15px]"],
  ["squiggle", "h-[15px]"],
  ["cropDoc", "h-[16px]"],
  ["gPipes", "h-[15px]"],
  ["-", "h-[5px]"],
  ["selection", "h-[16px]"],
  ["picture", "h-[16px]"],
  ["-", "h-[5px]"],
  ["gClip", "h-[15px]"],
  ["-", "h-[5px]"],
  ["folderUp", "h-[16px]"],
];

function ToolStrip({ tools, className }: { tools: Tool[]; className: string }) {
  return (
    <div className={`flex flex-col border-r border-b border-[#9fa0a6] bg-[#dbdce1] shadow-[1px_1px_0_#f6f6f8] ${className}`}>
      <div className="mx-[2px] mt-[3px] mb-[4px] border-t border-dotted border-[#26262a]" />
      {tools.map(([icon, height, drop], i) =>
        icon === "-" ? (
          <div key={i} className={`flex items-center px-[3px] ${height}`}>
            <div className="h-px w-full bg-[#9b9ca2]" />
          </div>
        ) : (
          <button key={i} aria-label={`Инструмент ${i + 1}`} className={`flex items-center gap-[7px] pl-[4px] ${height}`}>
            <Icon name={icon} />
            {drop ? <Caret muted /> : null}
          </button>
        ),
      )}
    </div>
  );
}

type Node = { label: string; icon: string; pad: string; box?: string; selected?: boolean };
const nodes: Node[] = [
  { label: "Деталь3", icon: "tree", pad: "pl-[2px]" },
  { label: "Примечания", icon: "note", pad: "pl-[14px]" },
  { label: "Лист1", icon: "sheet", pad: "pl-[4px]", box: "−" },
  { label: "Формат листа1", icon: "format", pad: "pl-[17px]", box: "+" },
  { label: "Чертежный вид1", icon: "viewRound", pad: "pl-[17px]", box: "−" },
  { label: "Деталь3<1>", icon: "part", pad: "pl-[30px]", box: "+" },
  { label: "Чертежный вид2", icon: "viewFlat", pad: "pl-[17px]", box: "+" },
  { label: "Чертежный вид3", icon: "viewFlat2", pad: "pl-[17px]", box: "+" },
  { label: "Чертежный вид4", icon: "viewBlue", pad: "pl-[17px]", box: "−", selected: true },
  { label: "Деталь3<5>", icon: "part", pad: "pl-[30px]", box: "+" },
];

function FeaturePanel() {
  return (
    <aside className="col-start-2 row-start-2 flex flex-col border-r-2 border-[#2e3036] bg-[#e1e2e8]">
      <div className="flex h-[20px] items-end border-t border-[#8a8b90] bg-[#d7d8dd] pl-[2px]">
        <button aria-label="Дерево конструирования" className="flex h-[16px] w-[18px] items-center justify-center border border-b-0 border-[#55565c] bg-[#e6e7ec]">
          <Icon name="tree" />
        </button>
        <button aria-label="Менеджер свойств" className="flex h-[15px] w-[18px] items-center justify-center border border-[#55565c] bg-[#a5a6ac]">
          <Icon name="props" />
        </button>
        <button aria-label="Развернуть панель" className="mr-[4px] ml-auto text-[12px] leading-[17px] text-black">
          »
        </button>
      </div>
      <label className="mx-[1px] mt-[1px] flex h-[12px] items-center border border-[#6c6e78] bg-[#f4f5f8] pl-[4px]">
        <Icon name="filter" className="size-[9px]" />
        <input aria-label="Фильтр дерева" className="w-full min-w-0 bg-transparent text-[8px] outline-none" />
      </label>
      <ul className="mt-[3px] grid h-[147px] auto-rows-fr text-[10px] leading-[13px] text-[#222226]">
        {nodes.map((n) => (
          <li key={n.label} className={`flex items-center ${n.pad}`}>
            {n.box && (
              <button aria-label={`Узел ${n.label}`} className="mr-[3px] flex size-[7px] shrink-0 items-center justify-center border border-[#9a9ca4] bg-[#f2f3f6] text-[7px] leading-none text-[#44464e]">
                {n.box}
              </button>
            )}
            <Icon name={n.icon} className="mr-[2px] size-[12px]" />
            <span className={n.selected ? "bg-[#1473c8] text-white" : ""}>{n.label}</span>
          </li>
        ))}
      </ul>
    </aside>
  );
}

const viewTools = [
  ["zoomPrev", 0],
  ["zoomFit", 0],
  ["zoomArea", 0],
  ["section", 0],
  ["rotate", 0],
  ["view3d", 0],
  ["cube", 1],
  ["glasses", 1],
  ["sphere", 0],
] as const;

const paneTools = ["home", "books", "folder", "palette", "colors", "props", "chat"];

function Canvas() {
  return (
    <main className="relative col-start-3 row-span-2 row-start-1 overflow-hidden border-t border-[#22242c] bg-[#e4e6d9]">
      <svg className="absolute inset-0 size-full" fill="none" stroke="#0c0c0c" aria-label="Чертеж">
        <g transform="translate(-203 -96)">
          <path d="M203 114.500h145.500V108" />
          <path d="M203 195.500h146M348.500 195v421.500M203 616h146" strokeWidth="1.500" />
          <path d="M203 198h143.500v415.500H203" stroke="#333" />
          <path d="M349 195.500h85" stroke="#b4b6a8" />
          <path d="M349 616.500h85" stroke="#444" />
          <path d="M428.500 196v420" stroke="#444" />
          <path d="M428.500 195l-3.500 20 3.500-2 3.500 2zM428.500 616l-3.500-20 3.500 2 3.500-2z" fill="#000" stroke="none" />
          <text transform="translate(421 380) rotate(-90)" fontSize="28" fill="#0c0c0c" stroke="none" className="font-['Liberation_Sans',sans-serif]">
            500
          </text>
          <rect x="618.500" y="160.500" width="77" height="470" stroke="#6fa3bf" strokeDasharray="2 2" />
          <rect x="652.500" y="194.500" width="9" height="401" fill="#e8e9dd" />
          <g shapeRendering="crispEdges">
            <path d="M1083 136 1155 96M1084 138 1157 97" />
            <path d="M1084 137l107 61.500M1084 145l107 61.500M1084 473.500l107 61.500M1083.500 480.500 1191 542.500l6 3 4-2.500" />
            <path d="M1191 198l9.500 5M1191 198.500 1290 141M1195 201l95-54.500M1201 203l89-51" />
          </g>
          <path d="M1083.500 136v345M1191 198v345" strokeWidth="2" />
          <path d="M1196 201v344" stroke="#777970" strokeWidth="2" />
          <path d="M1200.500 203v340" />
          <path d="M1201 543 1290 491" strokeWidth="1.800" />
          <ellipse cx="1137" cy="134" rx="13" ry="7.500" />
          <path d="M1126 138c5-5 17-5 22 0" />
        </g>
      </svg>
      <div className="absolute top-[3px] left-[460px] flex items-center gap-[3px]">
        {viewTools.map(([icon, drop]) => (
          <button key={icon} aria-label={`Вид: ${icon}`} className="flex items-center gap-[6px]">
            <Icon name={icon} />
            {drop ? <Caret muted /> : null}
          </button>
        ))}
      </div>
      <div className="absolute top-[4px] right-[7px] flex items-center gap-[5px]">
        {["paneL", "paneR", "min", "restore", "close"].map((icon) => (
          <button key={icon} aria-label={`Окно: ${icon}`}>
            <Icon name={icon} className="size-[10px]" />
          </button>
        ))}
      </div>
      <div className="absolute top-[39px] right-0 flex w-[16px] flex-col border-y border-l border-[#3c3e44]">
        {paneTools.map((icon, i) => (
          <button
            key={icon}
            aria-label={`Панель задач: ${icon}`}
            className={`flex h-[16px] items-center justify-center ${i === 0 ? "bg-[#eceef0]" : "border-t border-[#3c3e44] bg-[#a8aab0]"}`}
          >
            <Icon name={icon} className="size-[13px]" />
          </button>
        ))}
      </div>
      <button aria-label="Скрыть панель" className="absolute top-[268px] left-0 flex h-[26px] w-[5px] flex-col items-center justify-center gap-[5px] border-y border-r border-[#111] bg-[#eceef0]">
        <span className="size-[2px] bg-black" />
        <span className="size-[2px] bg-black" />
        <span className="size-[2px] bg-black" />
      </button>
    </main>
  );
}

const navPaths = ["M3 2v8M9 2 5 6l4 4z", "M8 2 4 6l4 4z", "M5 2l4 4-4 4z", "M3 2l4 4-4 4zM9 2v8"];

function SheetBar() {
  return (
    <div className="col-span-2 col-start-2 row-start-3 flex items-start border-t border-[#a2a3a8] bg-[#e2e3e9]">
      {navPaths.map((d, i) => (
        <button key={d} aria-label={`Переход ${i + 1}`} className="h-[13px] w-[13px] border border-[#8a8a9c] bg-[#a9a9b9]">
          <svg viewBox="0 0 12 12" className="size-full" fill="#8a8a9e" stroke="#8a8a9e" aria-hidden="true">
            <path d={d} />
          </svg>
        </button>
      ))}
      <button className="ml-[2px] flex h-[13px] w-[57px] items-center justify-center gap-[1px] border-x border-b border-[#8a8b96] bg-[#e6e7ee] text-[10px] leading-[12px] font-bold text-black">
        <Icon name="sheet" className="size-[11px]" />
        Лист1
      </button>
      <button aria-label="Добавить лист" className="flex h-[12px] w-[26px] items-center justify-center border border-t-0 border-[#5c5c6c] bg-[#bcbccc]">
        <Icon name="addSheet" className="size-[11px]" />
      </button>
    </div>
  );
}

function StatusBar() {
  return (
    <footer className="flex h-[14px] items-center border-t border-[#55565c] bg-[#d9dade] font-[Roboto,'Noto_Sans',sans-serif] text-[10px] leading-[13px] whitespace-nowrap text-[#26262a]">
      <span className="mr-auto pl-[1px]">SOLIDWORKS Premium 2015 x64 Edition</span>
      <span className="w-[62px]">135.03мм</span>
      <span className="w-[56px]">229.97мм</span>
      <span className="w-[22px]">0мм</span>
      <span className="w-[87px]">Недоопределен</span>
      <span className="w-[154px]">Редактируется Чертежный вид4</span>
      <span className="w-[55px]">1 : 10</span>
      <button className="flex w-[124px] items-center gap-[13px]">
        Настройка
        <Caret />
      </button>
      <Icon name="coin" className="mr-[4px] size-[11px]" />
    </footer>
  );
}

const apps = [
  ["win", "Пуск", 0, "size-[16px]"],
  ["find", "Поиск", 0, "size-[19px]"],
  ["taskView", "Представление задач", 0, "size-[15px]"],
  ["explorer", "Проводник", 1, "size-[19px]"],
  ["yandex", "Яндекс Браузер", 1, "size-[19px]"],
  ["calc", "Калькулятор", 0, "size-[19px]"],
  ["snip", "Ножницы", 0, "size-[19px]"],
  ["monitor", "Монитор ресурсов", 1, "size-[19px]"],
  ["opera", "Opera", 1, "size-[19px]"],
  ["player", "Проигрыватель", 1, "size-[17px]"],
  ["solidworks", "SOLIDWORKS 2015", 2, "size-[19px]"],
  ["obs", "OBS", 1, "size-[19px]"],
  ["camtasia", "Camtasia", 1, "size-[17px]"],
] as const;

function Taskbar() {
  return (
    <footer className="flex h-[33px] items-stretch bg-linear-to-r from-[#21363f] from-50% to-[#1b2340] text-white">
      <div className="grid w-[534px] shrink-0 grid-cols-13">
        {apps.map(([icon, label, state, size]) => (
          <button key={icon} aria-label={label} className={`flex flex-col items-center ${state === 2 ? "bg-[#4c6068]" : ""}`}>
            <span className="flex flex-1 items-center pt-[2px]">
              <Icon name={icon} className={size} />
            </span>
            <span className={`h-[2px] ${state ? "bg-[#76b5ea]" : ""} ${state === 2 ? "w-full" : "w-[34px]"}`} />
          </button>
        ))}
      </div>
      <div className="ml-auto flex items-center gap-[8px] font-[Roboto,'Noto_Sans',sans-serif] text-[10px]">
        {["chevronUp", "mic", "battery", "wifi", "speaker"].map((icon) => (
          <button key={icon} aria-label={`Трей: ${icon}`}>
            <Icon name={icon} />
          </button>
        ))}
        <button>РУС</button>
        <button className="flex w-[54px] flex-col items-center leading-[15px]">
          <span>22:00</span>
          <span>07.10.2023</span>
        </button>
        <div className="flex items-center self-stretch">
          <button aria-label="Уведомления" className="flex w-[34px] justify-center">
            <svg viewBox="0 0 20 20" className="size-[20px]" aria-hidden="true">
              <path d="M2 2h13v11H9l-4 3v-3H2z" fill="#fff" />
              <path d="M4.500 5.500h8M4.500 8h8" stroke="#1b2340" />
              <circle cx="14" cy="14" r="5.500" fill="#3a4150" stroke="#99a" />
              <text x="14" y="17" textAnchor="middle" fontSize="9" fill="#fff">
                3
              </text>
            </svg>
          </button>
          <div className="h-full w-[4px] border-l border-[#4c546c]" />
        </div>
      </div>
    </footer>
  );
}

export default function App() {
  return (
    <div className="flex h-screen flex-col overflow-hidden bg-[#d6d7dc] font-['Noto_Sans','Open_Sans',sans-serif]">
      <TitleBar />
      <Ribbon />
      <div className="grid min-h-0 flex-1 grid-cols-[53px_150px_1fr] grid-rows-[15px_1fr_15px]">
        <Tabs />
        <div className="col-start-1 row-span-2 row-start-2 flex items-start border-r border-[#b6b7bc] bg-[#d4d5da]">
          <div className="flex flex-col items-start">
            <ToolStrip tools={toolsA} className="w-[33px] pt-[1px] pb-[3px]" />
            <ToolStrip tools={toolsB} className="mt-[1px] w-[20px] pb-[2px]" />
            <ToolStrip tools={toolsC} className="mt-[1px] w-[20px] pb-[4px]" />
          </div>
          <ToolStrip tools={toolsD} className="w-[19px] pt-[1px] pb-[4px]" />
        </div>
        <FeaturePanel />
        <Canvas />
        <SheetBar />
      </div>
      <StatusBar />
      <Taskbar />
    </div>
  );
}
